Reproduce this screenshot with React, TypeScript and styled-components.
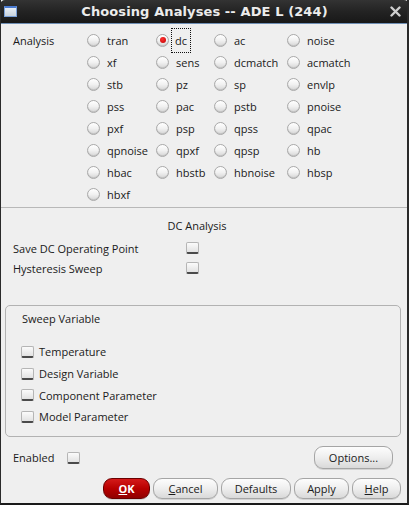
import React from "react";
import styled, { createGlobalStyle } from "styled-components";

const Global = createGlobalStyle`
  html, body { margin: 0; padding: 0; background: #1e1e1e; }
  body { font-family: "Open Sans", "Noto Sans", sans-serif; font-size: 11px; color: #1a1a1a; }
  * { box-sizing: border-box; }
`;

const Window = styled.div`
  width: 409px;
  height: 505px;
  display: flex;
  flex-direction: column;
  background: #efefef;
  border-left: 1px solid #2a2a2a;
  border-right: 2px solid #2a2a2a;
  border-bottom: 2px solid #1a1a1a;
  overflow: hidden;
`;

const TitleBar = styled.div`
  height: 24px;
  flex: none;
  display: flex;
  align-items: center;
  justify-content: space-between;
  padding: 0 8px 0 4px;
  background: linear-gradient(#333 0%, #232323 50%, #181818 100%);
  border-radius: 5px 5px 0 0;
  border-bottom: 1px solid #6f8fb5;
  margin: 0 -2px 0 -1px;
`;

const Title = styled.div`
  flex: 1;
  text-align: center;
  color: #ececec;
  font-family: "DejaVu Sans", sans-serif;
  font-weight: bold;
  font-size: 13px;
  letter-spacing: 0.1px;
  padding-left: 2px;
`;

const WinIcon = styled.div`
  width: 13px;
  height: 11px;
  border: 1px solid #7aa0d8;
  border-top: 2px solid #4a7ad0;
  background: linear-gradient(#e8eef6, #c8d2dc);
`;

const Section = styled.div`
  display: flex;
  padding: 5px 0 0 12px;
  height: 184px;
  flex: none;
  border-bottom: 1px solid #b8b8b8;
`;

const Label = styled.div`
  width: 74px;
  padding-top: 4px;
`;

const RadioGrid = styled.div`
  display: grid;
  grid-template-columns: 69px 58px 73px 100px;
  grid-auto-rows: 22px;
`;

const RadioItem = styled.div`
  display: flex;
  align-items: center;
  gap: 6px;
  white-space: nowrap;
`;

const RadioCircle = styled.span<{ $on?: boolean }>`
  width: 13px;
  height: 13px;
  border-radius: 50%;
  border: 1px solid #a9a9a9;
  background: linear-gradient(#ffffff 0%, #f1f1f1 50%, #d6d6d6 100%);
  box-shadow: inset 0 -1px 0 #c4c4c4;
  display: flex;
  align-items: center;
  justify-content: center;
  flex: none;
  &::after {
    content: "";
    display: ${(p) => (p.$on ? "block" : "none")};
    width: 6px;
    height: 6px;
    border-radius: 50%;
    background: radial-gradient(circle at 40% 35%, #ff3030, #c00000);
  }
`;

const RadioText = styled.span<{ $focus?: boolean }>`
  padding: 2px 1px;
  outline: ${(p) => (p.$focus ? "1px dotted #111" : "none")};
  outline-offset: 2px;
  margin-left: ${(p) => (p.$focus ? "-1px" : "0")};
`;

const DcHeader = styled.div`
  height: 30px;
  flex: none;
  display: flex;
  align-items: flex-end;
  justify-content: center;
  padding-right: 14px;
  padding-bottom: 5px;
`;

const OptRow = styled.div`
  height: 20px;
  display: flex;
  align-items: center;
  padding-left: 12px;
  flex: none;
`;

const OptLabel = styled.span`
  width: 173px;
`;

const Check = styled.span`
  width: 13px;
  height: 12px;
  flex: none;
  border: 1px solid #b5b5b5;
  border-bottom: 2px solid #4a4a4a;
  border-radius: 2px;
  background: linear-gradient(#fbfbfb, #e2e2e2);
`;

const Group = styled.div`
  margin: 27px 6px 0 4px;
  height: 132px;
  flex: none;
  border: 1px solid #b2b2b2;
  border-radius: 5px;
  padding: 5px 0 0 15px;
  display: flex;
  flex-direction: column;
`;

const GroupTitle = styled.div`
  height: 30px;
  padding-left: 1px;
`;

const GroupRow = styled.div`
  height: 21.7px;
  flex: none;
  display: flex;
  align-items: center;
  gap: 5px;
`;

const BottomRow = styled.div`
  display: flex;
  align-items: center;
  justify-content: space-between;
  padding: 8px 14px 0 12px;
  height: 33px;
  flex: none;
`;

const Enabled = styled.div`
  display: flex;
  align-items: center;
  gap: 13px;
`;

const Button = styled.button<{ $primary?: boolean; $w: number; $h?: number }>`
  width: ${(p) => p.$w}px;
  height: ${(p) => p.$h ?? 21}px;
  font-family: "Open Sans", "Noto Sans", sans-serif;
  font-size: 11px;
  font-weight: ${(p) => (p.$primary ? "bold" : "normal")};
  color: ${(p) => (p.$primary ? "#fff" : "#1a1a1a")};
  border-radius: 9px;
  border: 1px solid ${(p) => (p.$primary ? "#6a0000" : "#a5a5a5")};
  background: ${(p) =>
    p.$primary
      ? "linear-gradient(#d41a1a 0%, #b80000 50%, #900000 100%)"
      : "linear-gradient(#fdfdfd 0%, #eeeeee 50%, #d9d9d9 100%)"};
  box-shadow: 0 1px 0 rgba(0, 0, 0, 0.12);
  padding: 0;
  text-align: center;
  u { text-decoration: underline; }
`;

const ButtonBar = styled.div`
  display: flex;
  justify-content: flex-end;
  gap: 3px;
  padding: 8px 6px 0 0;
`;

const rows = [
  ["tran", "dc", "ac", "noise"],
  ["xf", "sens", "dcmatch", "acmatch"],
  ["stb", "pz", "sp", "envlp"],
  ["pss", "pac", "pstb", "pnoise"],
  ["pxf", "psp", "qpss", "qpac"],
  ["qpnoise", "qpxf", "qpsp", "hb"],
  ["hbac", "hbstb", "hbnoise", "hbsp"],
  ["hbxf"],
];

export default function App() {
  return (
    <>
      <Global />
      <Window>
        <TitleBar>
          <WinIcon />
          <Title>Choosing Analyses -- ADE L (244)</Title>
          <svg width="11" height="11" viewBox="0 0 11 11">
            <path d="M1.5 1.5 L9.5 9.5 M9.5 1.5 L1.5 9.5" stroke="#cfcfcf" strokeWidth="2.4" strokeLinecap="round" />
          </svg>
        </TitleBar>
        <Section>
          <Label>Analysis</Label>
          <RadioGrid>
            {rows.flat().map((name) => (
              <RadioItem key={name}>
                <RadioCircle $on={name === "dc"} />
                <RadioText $focus={name === "dc"}>{name}</RadioText>
              </RadioItem>
            ))}
          </RadioGrid>
        </Section>
        <DcHeader>DC Analysis</DcHeader>
        <OptRow>
          <OptLabel>Save DC Operating Point</OptLabel>
          <Check />
        </OptRow>
        <OptRow>
          <OptLabel>Hysteresis Sweep</OptLabel>
          <Check />
        </OptRow>
        <Group>
          <GroupTitle>Sweep Variable</GroupTitle>
          {["Temperature", "Design Variable", "Component Parameter", "Model Parameter"].map((t) => (
            <GroupRow key={t}>
              <Check />
              <span>{t}</span>
            </GroupRow>
          ))}
        </Group>
        <BottomRow>
          <Enabled>
            <span>Enabled</span>
            <Check />
          </Enabled>
          <Button $w={79} $h={23}>Options...</Button>
        </BottomRow>
        <ButtonBar>
          <Button $primary $w={47}><u>O</u>K</Button>
          <Button $w={65}><u>C</u>ancel</Button>
          <Button $w={70}>Defaults</Button>
          <Button $w={55}>Apply</Button>
          <Button $w={49}><u>H</u>elp</Button>
        </ButtonBar>
      </Window>
    </>
  );
}
